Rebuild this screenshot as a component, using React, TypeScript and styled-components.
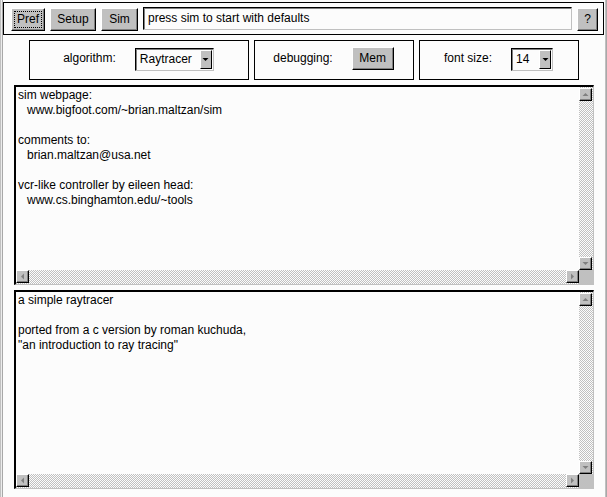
import React from 'react';
import styled, { createGlobalStyle, css } from 'styled-components';

const Global = createGlobalStyle`
  html, body { margin: 0; padding: 0; background: #fcfcfc; }
  body { font-family: "Liberation Sans", Arial, Helvetica, sans-serif; font-size: 12px; color: #000; }
`;

const FONT = `12px "Liberation Sans", Arial, Helvetica, sans-serif`;

const Frame = styled.div`
  width: 607px;
  height: 497px;
  display: flex;
  background: #fcfcfc;
  overflow: hidden;
`;

const Edge = styled.div<{ $side: 'left' | 'right' }>`
  flex: none;
  width: 3px;
  background: ${(p) =>
    p.$side === 'left'
      ? 'linear-gradient(to right, #c0c0c0 0 1px, #ececec 1px 2px, #a8a8a8 2px 3px)'
      : 'linear-gradient(to right, #fcfcfc 0 1px, #c0c0c0 1px 2px, #a8a8a8 2px 3px)'};
`;

const Main = styled.div`
  width: 601px;
  flex: none;
  display: flex;
  flex-direction: column;
  padding-top: 2px;
  box-sizing: border-box;
`;

const Toolbar = styled.div`
  height: 33px;
  box-sizing: border-box;
  border: 1px solid #000;
  display: flex;
  align-items: center;
  gap: 5px;
  padding: 1px 5px 0 7px;
`;

const Raised = styled.button<{ $w: number; $focused?: boolean }>`
  width: ${(p) => p.$w}px;
  height: 23px;
  flex: none;
  box-sizing: border-box;
  margin: 0;
  padding: 0 0 1px;
  background: #c0c0c0;
  border: 1px solid;
  border-color: #fff #000 #000 #fff;
  box-shadow: inset -1px -1px 0 #808080;
  font: ${FONT};
  color: #000;
  display: flex;
  align-items: center;
  justify-content: center;
  ${(p) =>
    p.$focused &&
    css`
      outline: 1px dotted #000;
      outline-offset: -4px;
    `}
`;

const Field = styled.div`
  width: 429px;
  height: 23px;
  flex: none;
  box-sizing: border-box;
  border: 1px solid;
  border-color: #000 #c0c0c0 #c0c0c0 #000;
  box-shadow: inset 1px 1px 0 #808080;
  background: #fcfcfc;
  display: flex;
  align-items: center;
  padding: 0 0 1px 4px;
  margin-top: -1px;
  font: ${FONT};
`;

const OptionsRow = styled.div`
  display: flex;
  justify-content: center;
  gap: 5px;
  margin-top: 5px;
`;

const Panel = styled.div<{ $w: number }>`
  width: ${(p) => p.$w}px;
  height: 40px;
  box-sizing: border-box;
  border: 1px solid #000;
  display: flex;
  align-items: center;
  justify-content: center;
  gap: 19px;
  padding-bottom: 4px;
`;

const Label = styled.span`
  font: ${FONT};
  white-space: nowrap;
`;

const Select = styled.div<{ $w: number }>`
  width: ${(p) => p.$w}px;
  height: 23px;
  box-sizing: border-box;
  border: 1px solid;
  border-color: #000 #c0c0c0 #c0c0c0 #000;
  box-shadow: inset 1px 1px 0 #808080;
  background: #fcfcfc;
  display: flex;
  align-items: center;
  justify-content: space-between;
  padding: 1px 1px 1px 4px;
  margin-top: 2px;
  font: ${FONT};
`;

const SelectArrow = styled.div`
  width: 12px;
  height: 19px;
  box-sizing: border-box;
  background: #c0c0c0;
  border: 1px solid;
  border-color: #fff #000 #000 #fff;
  display: flex;
  align-items: center;
  justify-content: center;
`;

const Pane = styled.div<{ $h: number }>`
  width: 580px;
  height: ${(p) => p.$h}px;
  margin: 5px auto 0 11px;
  box-sizing: border-box;
  border-style: solid;
  border-width: 2px 1px 1px 2px;
  border-color: #000 #c0c0c0 #c0c0c0 #000;
  display: grid;
  grid-template-columns: 1fr 14px;
  grid-template-rows: 1fr 14px;
  background: #fcfcfc;
`;

const PaneText = styled.div`
  padding: 1px 2px 0;
  font: ${FONT};
  line-height: 15px;
  overflow: hidden;
`;

const Line = styled.div<{ $indent?: boolean }>`
  height: 15px;
  white-space: pre;
  padding-left: ${(p) => (p.$indent ? 9 : 0)}px;
`;

const checker = css`
  background-color: #fcfcfc;
  background-image: repeating-conic-gradient(#c0c0c0 0% 25%, #fcfcfc 0% 50%);
  background-size: 2px 2px;
`;

const VTrack = styled.div`
  ${checker};
  display: flex;
  flex-direction: column;
  justify-content: space-between;
  padding-top: 1px;
`;

const HTrack = styled.div`
  ${checker};
  display: flex;
  justify-content: space-between;
`;

const Corner = styled.div`
  background: #c0c0c0;
`;

const ArrowBtn = styled.div`
  width: 13px;
  height: 13px;
  box-sizing: border-box;
  background: #c0c0c0;
  border: 1px solid;
  border-color: #fff #000 #000 #fff;
  box-shadow: inset -1px -1px 0 #808080;
  display: flex;
  align-items: center;
  justify-content: center;
`;

type Dir = 'up' | 'down' | 'left' | 'right';
const tri: Record<Dir, string> = {
  up: '0.5,4 3.5,1 6.5,4',
  down: '0.5,1 3.5,4 6.5,1',
  left: '4,0.5 1,3.5 4,6.5',
  right: '1,0.5 4,3.5 1,6.5',
};

const Arrow = ({ dir, color = '#808080' }: { dir: Dir; color?: string }) => {
  const vertical = dir === 'up' || dir === 'down';
  return (
    <svg width={vertical ? 7 : 5} height={vertical ? 5 : 7} viewBox={vertical ? '0 0 7 5' : '0 0 5 7'}>
      <polygon points={tri[dir]} fill={color} />
    </svg>
  );
};

const Scroller = ({ h, lines }: { h: number; lines: { t: string; i?: boolean }[] }) => (
  <Pane $h={h}>
    <PaneText>
      {lines.map((l, k) => (
        <Line key={k} $indent={l.i}>
          {l.t || '\u00a0'}
        </Line>
      ))}
    </PaneText>
    <VTrack>
      <ArrowBtn>
        <Arrow dir="up" />
      </ArrowBtn>
      <ArrowBtn>
        <Arrow dir="down" />
      </ArrowBtn>
    </VTrack>
    <HTrack>
      <ArrowBtn>
        <Arrow dir="left" />
      </ArrowBtn>
      <ArrowBtn>
        <Arrow dir="right" />
      </ArrowBtn>
    </HTrack>
    <Corner />
  </Pane>
);

const about = [
  { t: 'sim webpage:' },
  { t: 'www.bigfoot.com/~brian.maltzan/sim', i: true },
  { t: '' },
  { t: 'comments to:' },
  { t: 'brian.maltzan@usa.net', i: true },
  { t: '' },
  { t: 'vcr-like controller by eileen head:' },
  { t: 'www.cs.binghamton.edu/~tools', i: true },
];

const info = [
  { t: 'a simple raytracer' },
  { t: '' },
  { t: 'ported from a c version by roman kuchuda,' },
  { t: '"an introduction to ray tracing"' },
];

export default function App() {
  return (
    <>
      <Global />
      <Frame>
        <Edge $side="left" />
        <Main>
          <Toolbar>
            <Raised $w={34} $focused>
              Pref
            </Raised>
            <Raised $w={46}>Setup</Raised>
            <Raised $w={37}>Sim</Raised>
            <Field>press sim to start with defaults</Field>
            <Raised $w={21}>?</Raised>
          </Toolbar>
          <OptionsRow>
            <Panel $w={220}>
              <Label>algorithm:</Label>
              <Select $w={79}>
                <span>Raytracer</span>
                <SelectArrow>
                  <Arrow dir="down" color="#000" />
                </SelectArrow>
              </Select>
            </Panel>
            <Panel $w={160}>
              <Label>debugging:</Label>
              <Raised $w={42}>Mem</Raised>
            </Panel>
            <Panel $w={160}>
              <Label>font size:</Label>
              <Select $w={42}>
                <span>14</span>
                <SelectArrow>
                  <Arrow dir="down" color="#000" />
                </SelectArrow>
              </Select>
            </Panel>
          </OptionsRow>
          <Scroller h={200} lines={about} />
          <Scroller h={199} lines={info} />
        </Main>
        <Edge $side="right" />
      </Frame>
    </>
  );
}
